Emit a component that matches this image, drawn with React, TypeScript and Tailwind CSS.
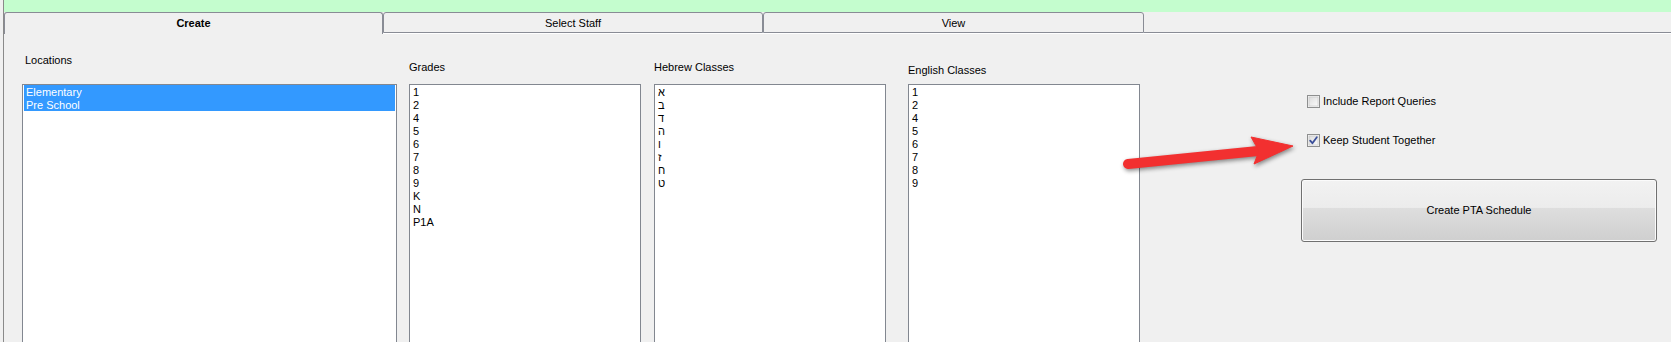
import React from "react";

const grades = ["1", "2", "4", "5", "6", "7", "8", "9", "K", "N", "P1A"];
const hebrew = ["א", "ב", "ד", "ה", "ו", "ז", "ח", "ט"];
const english = ["1", "2", "4", "5", "6", "7", "8", "9"];

function ListBox({ items, selected }: { items: string[]; selected?: boolean }) {
  return (
    <div className="h-[300px] shrink-0 border border-[#828790] bg-white px-px">
      {items.map((it) => (
        <div
          key={it}
          className={
            selected
              ? "h-[13px] leading-[15px] pl-[2px] bg-[#3399ff] text-white whitespace-nowrap"
              : "h-[13px] leading-[15px] pl-[2px] text-black whitespace-nowrap"
          }
        >
          {it}
        </div>
      ))}
    </div>
  );
}

function CheckBox({ checked }: { checked?: boolean }) {
  return (
    <svg width="13" height="13" viewBox="0 0 13 13" className="shrink-0">
      <defs>
        <linearGradient id={checked ? "cbg1" : "cbg0"} x1="0" y1="0" x2="1" y2="1">
          <stop offset="0" stopColor="#dcdcdc" />
          <stop offset="1" stopColor="#fbfbfb" />
        </linearGradient>
      </defs>
      <rect x="0.5" y="0.5" width="12" height="12" fill="#f4f4f4" stroke="#8e8f8f" />
      <rect x="2" y="2" width="9" height="9" fill={checked ? "url(#cbg1)" : "url(#cbg0)"} stroke="#c4c4c4" strokeWidth="0.6" />
      {checked && (
        <path d="M3.2 6.6 L5.4 9.2 L9.8 3.2" fill="none" stroke="#3b4f9a" strokeWidth="1.8" strokeLinecap="round" strokeLinejoin="round" />
      )}
    </svg>
  );
}

export default function App() {
  return (
    <div
      className="relative w-[1671px] h-[342px] overflow-hidden bg-[#f0f0f0] pl-[3px] text-[11px] text-black"
      style={{ fontFamily: '"Liberation Sans", Arial, sans-serif' }}
    >
      <div className="h-full border-l border-[#8a8a8a] flex flex-col">
        <div className="h-[12px] shrink-0 bg-[#c4fdce]" />
        <div className="flex h-[21px] shrink-0 items-start">
          <div className="relative z-10 w-[379px] h-[22px] border-t border-l border-r border-[#898c95] rounded-t-[3px] bg-[#f0f0f0] pt-[4px] leading-[13px] text-center font-bold">
            Create
          </div>
          <div className="w-[380px] h-[21px] border border-[#898c95] rounded-t-[3px] bg-[#f0f0f0] pt-[4px] leading-[13px] text-center">
            Select Staff
          </div>
          <div className="w-[381px] h-[21px] border border-[#898c95] rounded-t-[3px] bg-[#f0f0f0] pt-[4px] leading-[13px] text-center">
            View
          </div>
          <div className="flex-1 h-[21px] border-b border-[#898c95]" />
        </div>
        <div className="flex-1 min-h-0 border-t border-white flex pl-[18px]">
          <div className="flex flex-col shrink-0 w-[375px]">
            <div className="h-[50px] shrink-0 pt-[20px] pl-[3px] leading-[13px]">Locations</div>
            <ListBox items={["Elementary", "Pre School"]} selected />
          </div>
          <div className="flex flex-col shrink-0 w-[232px] ml-[12px]">
            <div className="h-[50px] shrink-0 pt-[27px] leading-[13px]">Grades</div>
            <ListBox items={grades} />
          </div>
          <div className="flex flex-col shrink-0 w-[232px] ml-[13px]">
            <div className="h-[50px] shrink-0 pt-[27px] leading-[13px]">Hebrew Classes</div>
            <ListBox items={hebrew} />
          </div>
          <div className="flex flex-col shrink-0 w-[232px] ml-[22px]">
            <div className="h-[50px] shrink-0 pt-[30px] leading-[13px]">English Classes</div>
            <ListBox items={english} />
          </div>
          <div className="flex flex-col shrink-0 ml-[161px] w-[356px] pt-[61px]">
            <div className="flex items-center h-[13px] pl-[6px] gap-[3px] leading-[13px]">
              <CheckBox />
              <span>Include Report Queries</span>
            </div>
            <div className="flex items-center h-[13px] mt-[26px] pl-[6px] gap-[3px] leading-[13px]">
              <CheckBox checked />
              <span>Keep Student Together</span>
            </div>
            <div className="mt-[32px] h-[63px] shrink-0 border border-[#707070] rounded-[3px] shadow-[inset_0_0_0_1px_#fbfbfb] bg-[linear-gradient(to_bottom,#f2f2f2_0%,#ececec_45%,#dedede_46%,#cfcfcf_100%)] flex items-center justify-center leading-[13px]">
              Create PTA Schedule
            </div>
          </div>
        </div>
      </div>
      <svg
        className="absolute left-0 top-0 pointer-events-none"
        width="1671"
        height="342"
        viewBox="0 0 1671 342"
        style={{ filter: "drop-shadow(1px 2px 2px rgba(0,0,0,0.45))" }}
      >
        <line x1="1128" y1="164" x2="1258" y2="151" stroke="#f23030" strokeWidth="10" strokeLinecap="round" />
        <polygon points="1251,137 1293,146 1254,164 1259,151" fill="#f23030" stroke="#f23030" strokeWidth="1" strokeLinejoin="round" />
      </svg>
    </div>
  );
}
